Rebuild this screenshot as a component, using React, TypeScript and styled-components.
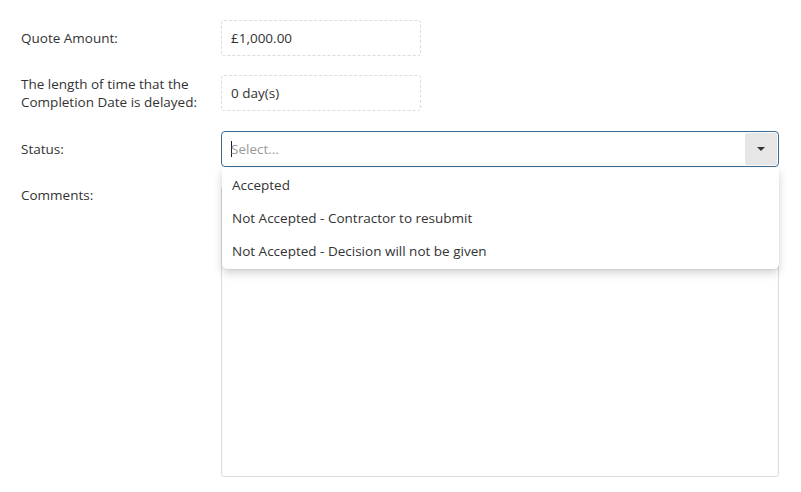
import * as React from "react";
import styled, { createGlobalStyle } from "styled-components";

const GlobalStyle = createGlobalStyle`
  html, body {
    margin: 0;
    padding: 0;
    background: #ffffff;
  }
  body {
    font-family: "Open Sans", "Noto Sans", "Liberation Sans", sans-serif;
    font-size: 13.5px;
    color: #333333;
  }
`;

const Form = styled.div`
  display: flex;
  flex-direction: column;
  padding: 20px 22px 0 21px;
`;

const Row = styled.div<{ $top?: boolean; $space?: number }>`
  display: flex;
  align-items: ${(p) => (p.$top ? "flex-start" : "center")};
  margin-top: ${(p) => p.$space ?? 0}px;
`;

const Label = styled.div`
  width: 200px;
  flex: none;
  line-height: 18px;
`;

const ReadOnlyBox = styled.div`
  width: 200px;
  height: 36px;
  box-sizing: border-box;
  border: 1px dashed #dcdcdc;
  border-radius: 3px;
  display: flex;
  align-items: center;
  padding: 0 9px;
`;

const SelectWrap = styled.div`
  position: relative;
  flex: 1;
`;

const SelectBox = styled.div`
  height: 36px;
  box-sizing: border-box;
  border: 1px solid #3d6b92;
  border-radius: 4px;
  display: flex;
  align-items: stretch;
`;

const Placeholder = styled.div`
  flex: 1;
  display: flex;
  align-items: center;
  padding-left: 9px;
  color: #9a9a9a;
`;

const Cursor = styled.span`
  display: inline-block;
  width: 1px;
  height: 16px;
  background: #222;
  margin-right: -1px;
`;

const ToggleButton = styled.div`
  width: 32px;
  margin: 1px;
  background: #e6e6e6;
  border-radius: 2px;
  display: flex;
  align-items: center;
  justify-content: center;
`;

const Menu = styled.div`
  position: absolute;
  top: 37px;
  left: 1px;
  right: 0;
  padding-bottom: 2px;
  background: #ffffff;
  border-radius: 0 0 5px 5px;
  box-shadow: 0 4px 10px rgba(0, 0, 0, 0.18), 0 1px 2px rgba(0, 0, 0, 0.06);
  z-index: 2;
`;

const MenuItem = styled.div`
  height: 33px;
  display: flex;
  align-items: center;
  padding-left: 10px;
  color: #333;
`;

const TextArea = styled.div`
  flex: 1;
  height: 291px;
  box-sizing: border-box;
  border: 1px solid #dcdcdc;
  border-radius: 3px;
`;

const Caret = () => (
  <svg width="8" height="4" viewBox="0 0 8 4">
    <path d="M0 0 H8 L4 4 Z" fill="#333" />
  </svg>
);

const options = [
  "Accepted",
  "Not Accepted - Contractor to resubmit",
  "Not Accepted - Decision will not be given",
];

export default function App() {
  return (
    <>
      <GlobalStyle />
      <Form>
        <Row>
          <Label>Quote Amount:</Label>
          <ReadOnlyBox>£1,000.00</ReadOnlyBox>
        </Row>
        <Row $space={19}>
          <Label>
            The length of time that the
            <br />
            Completion Date is delayed:
          </Label>
          <ReadOnlyBox>0 day(s)</ReadOnlyBox>
        </Row>
        <Row $space={20} style={{ position: "relative", zIndex: 2 }}>
          <Label>Status:</Label>
          <SelectWrap>
            <SelectBox>
              <Placeholder>
                <Cursor />
                Select...
              </Placeholder>
              <ToggleButton>
                <Caret />
              </ToggleButton>
            </SelectBox>
            <Menu>
              {options.map((o) => (
                <MenuItem key={o}>{o}</MenuItem>
              ))}
            </Menu>
          </SelectWrap>
        </Row>
        <Row $top $space={19}>
          <Label>Comments:</Label>
          <TextArea />
        </Row>
      </Form>
    </>
  );
}
